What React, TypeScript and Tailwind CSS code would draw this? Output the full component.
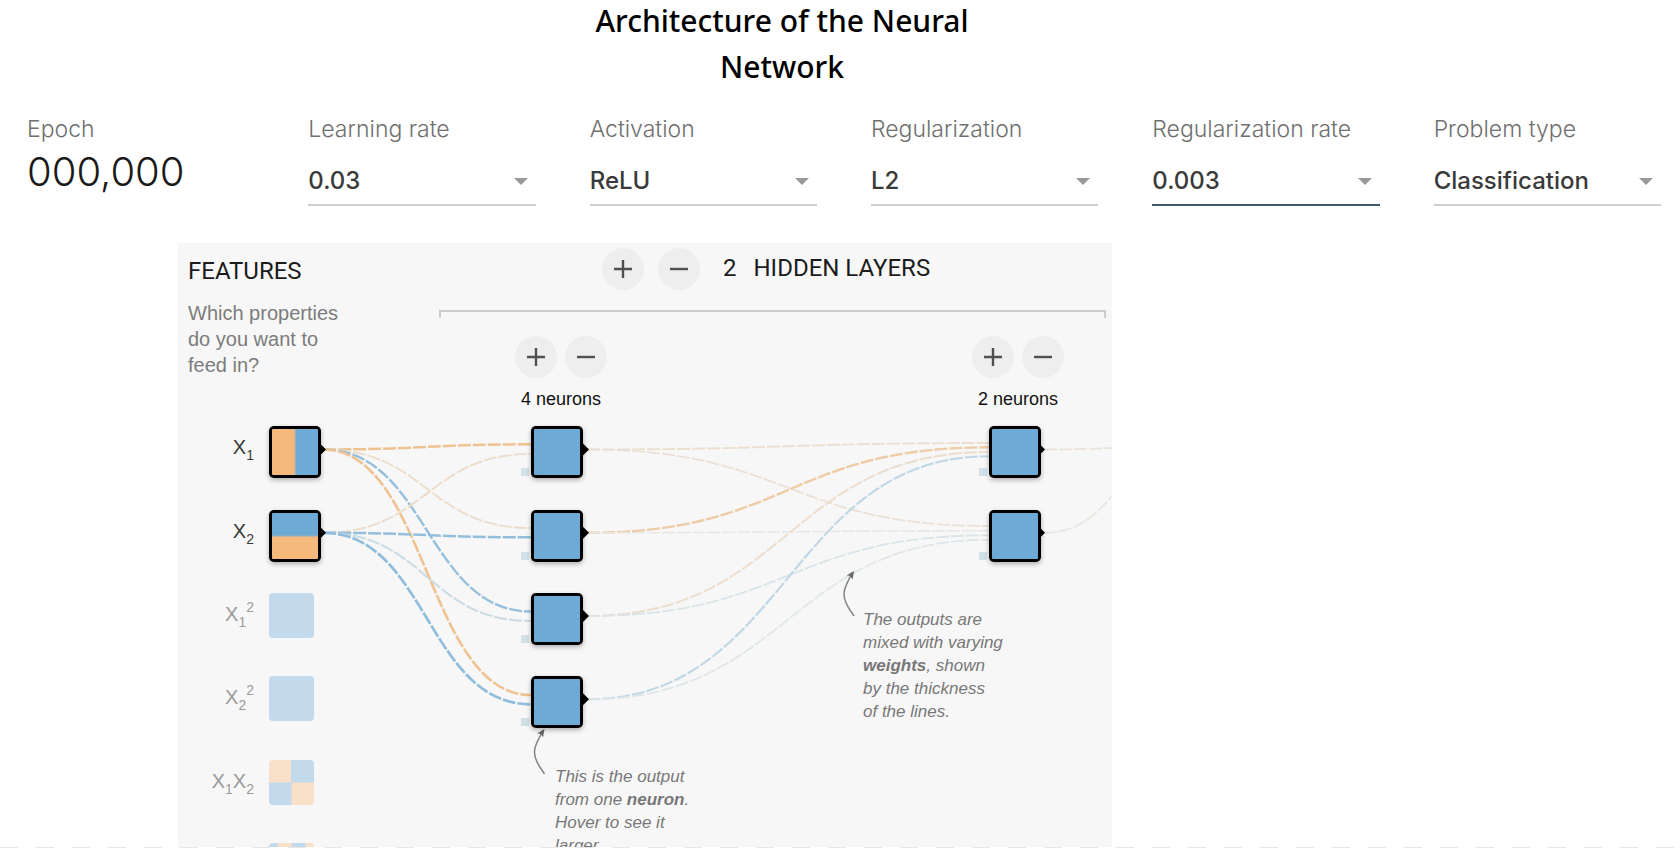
import React from 'react';

const ROW_TOPS = [183, 267, 350, 433, 517, 600];
const SOURCE_Y = [206.5, 289.8, 373, 456.3];

const HEAT = {
  blue: 'bg-[#6eaad6]',
  leftOrange: 'bg-[linear-gradient(90deg,#f6b97c_48%,#6eaad6_53%)]',
  bottomOrange: 'bg-[linear-gradient(180deg,#6eaad6_48%,#f6b97c_53%)]',
};

const LAYERS = [
  {
    id: 'features',
    left: 91,
    tip: 148,
    bias: false,
    heat: [HEAT.leftOrange, HEAT.bottomOrange],
  },
  {
    id: 'hidden-1',
    left: 353,
    tip: 411,
    bias: true,
    heat: [HEAT.blue, HEAT.blue, HEAT.blue, HEAT.blue],
  },
  {
    id: 'hidden-2',
    left: 811,
    tip: 867,
    bias: true,
    heat: [HEAT.blue, HEAT.blue],
  },
];

type Link = [number, number, number, number, string, number];

// x1, y1, x2, y2, colour, width
const LINKS: Link[] = [
  [145, SOURCE_Y[0], 353, 201.3, '#eec391', 2.5],
  [145, SOURCE_Y[0], 353, 285, '#ecdccb', 1.9],
  [145, SOURCE_Y[0], 353, 368.5, '#96c0dc', 2.4],
  [145, SOURCE_Y[0], 353, 452, '#eec391', 2.6],
  [145, SOURCE_Y[1], 353, 211, '#ecdccb', 2],
  [145, SOURCE_Y[1], 353, 294.3, '#93bfdc', 2.5],
  [145, SOURCE_Y[1], 353, 378, '#c9dbe5', 2],
  [145, SOURCE_Y[1], 353, 461.3, '#8fbddb', 2.7],
  [409, SOURCE_Y[0], 811, 200, '#ecdfd0', 1.9],
  [409, SOURCE_Y[0], 811, 283, '#ebe0d6', 1.8],
  [409, SOURCE_Y[1], 811, 204.3, '#edcca6', 2.4],
  [409, SOURCE_Y[1], 811, 287.8, '#e8e7e5', 1.6],
  [409, SOURCE_Y[2], 811, 209, '#ecddcd', 2],
  [409, SOURCE_Y[2], 811, 292.3, '#d9e4e9', 1.8],
  [409, SOURCE_Y[3], 811, 213.3, '#bfd7e5', 2.1],
  [409, SOURCE_Y[3], 811, 296.8, '#dfe6e9', 1.8],
  [866, SOURCE_Y[0], 1010, 203, '#eae3da', 1.8],
  [866, SOURCE_Y[1], 1010, 207, '#e9e6e1', 1.8],
];

const QUADRANTS =
  'bg-[conic-gradient(#c3d9ec_0_89deg,#f8e0c9_91deg_179deg,#c3d9ec_181deg_269deg,#f8e0c9_271deg_359deg,#c3d9ec)]';
const STRIPES =
  'bg-[linear-gradient(90deg,#c3d9ec_18%,#f8e0c9_22%_48%,#c3d9ec_52%_79%,#f8e0c9_83%)]';

const SELECTS = [
  { id: 'learning-rate', label: 'Learning rate', value: '0.03', active: false },
  { id: 'activation', label: 'Activation', value: 'ReLU', active: false },
  { id: 'regularization', label: 'Regularization', value: 'L2', active: false },
  { id: 'regularization-rate', label: 'Regularization rate', value: '0.003', active: true },
  { id: 'problem-type', label: 'Problem type', value: 'Classification', active: false },
];

function RoundButton({ kind, label }: { kind: 'add' | 'remove'; label: string }) {
  return (
    <button
      type="button"
      aria-label={label}
      className="flex size-[42px] shrink-0 items-center justify-center rounded-full bg-[#eeeeee]"
    >
      <svg viewBox="0 0 18 18" className="size-[18px]" stroke="#505050" strokeWidth="2.4">
        <path d={kind === 'add' ? 'M0 9H18M9 0V18' : 'M0 9H18'} />
      </svg>
    </button>
  );
}

function Field({ id, label, value, active }: (typeof SELECTS)[number]) {
  return (
    <div className="flex flex-col">
      <label htmlFor={id} className="whitespace-nowrap text-[23px] leading-6 font-light text-[#707070]">
        {label}
      </label>
      <div className="relative mt-[17px]">
        <select
          id={id}
          defaultValue={value}
          className={
            active
              ? 'h-12 w-full appearance-none border-b-2 border-[#3d5a6b] bg-transparent p-0 text-2xl font-medium text-[#3a3a3a] outline-none'
              : 'h-12 w-full appearance-none border-b-2 border-[#cfcfcf] bg-transparent p-0 text-2xl font-medium text-[#3a3a3a] outline-none'
          }
        >
          <option>{value}</option>
        </select>
        <svg viewBox="0 0 14 7" className="pointer-events-none absolute top-5 right-2 h-[7px] w-[14px]" fill="#999999">
          <path d="M0 0H14L7 7Z" />
        </svg>
      </div>
    </div>
  );
}

function LayerControls({ left, count }: { left: number; count: number }) {
  return (
    <div className="absolute top-[93px] flex flex-col items-center" style={{ left }}>
      <div className="flex gap-2">
        <RoundButton kind="add" label="Add neuron" />
        <RoundButton kind="remove" label="Remove neuron" />
      </div>
      <span className="mt-[9px] text-lg leading-6 text-[#111111]">{count} neurons</span>
    </div>
  );
}

function FeatureLabel({ row, muted, children }: { row: number; muted?: boolean; children: React.ReactNode }) {
  return (
    <div
      className={
        muted
          ? 'absolute left-0 w-[76px] text-right text-xl leading-[42px] whitespace-nowrap text-[#9b9b9b]'
          : 'absolute left-0 w-[76px] text-right text-xl leading-[42px] whitespace-nowrap text-[#3a3a3a]'
      }
      style={{ top: ROW_TOPS[row] }}
    >
      {children}
    </div>
  );
}

function Sub({ children }: { children: React.ReactNode }) {
  return <sub className="static align-[-6px] text-sm leading-none">{children}</sub>;
}

function Sup({ children }: { children: React.ReactNode }) {
  return <sup className="static align-[9px] text-sm leading-none">{children}</sup>;
}

function InactiveFeature({ row, fill }: { row: number; fill: string }) {
  return <div className={`absolute left-[91px] size-[45px] rounded-[4px] ${fill}`} style={{ top: ROW_TOPS[row] }} />;
}

function CalloutArrow({ x, y }: { x: number; y: number }) {
  return (
    <g transform={`translate(${x} ${y})`}>
      <path d="M0 45C-5 37.500-10 31-10 23C-10 16-6 11-3 4" fill="none" stroke="#858585" strokeWidth="1.500" />
      <path d="M0 0L-7.500 4.500L-3.800 4.700L-1.500 8.500Z" fill="#666666" />
    </g>
  );
}

function Network() {
  return (
    <>
      <svg className="absolute inset-0 h-[640px] w-full" viewBox="0 0 934 640" preserveAspectRatio="xMinYMin slice">
        {LINKS.map(([x1, y1, x2, y2, color, width], i) => {
          const mid = (x1 + x2) / 2;
          return (
            <path
              key={i}
              d={`M${x1} ${y1}C${mid} ${y1} ${mid} ${y2} ${x2} ${y2}`}
              fill="none"
              stroke={color}
              strokeWidth={width}
              strokeDasharray="13 2"
            />
          );
        })}
        {LAYERS.map((layer) =>
          layer.heat.map((_, i) => (
            <path
              key={`${layer.id}-${i}`}
              d={`M${layer.tip - 8} ${SOURCE_Y[i] - 8}L${layer.tip} ${SOURCE_Y[i]}L${layer.tip - 8} ${SOURCE_Y[i] + 8}Z`}
            />
          )),
        )}
        <CalloutArrow x={366.5} y={486} />
        <CalloutArrow x={676} y={328} />
      </svg>

      {LAYERS.map((layer) =>
        layer.heat.map((heat, i) => (
          <React.Fragment key={`${layer.id}-${i}`}>
            {layer.bias && (
              <div
                className="absolute size-2 bg-[#d2e0e8]"
                style={{ left: layer.left - 10, top: ROW_TOPS[i] + 42 }}
              />
            )}
            <div
              className="absolute size-[52px] rounded-[5px] bg-black p-[3px] shadow-[0_2px_5px_rgba(0,0,0,0.3)]"
              style={{ left: layer.left, top: ROW_TOPS[i] }}
            >
              <div className={`size-full rounded-[1px] ${heat}`} />
            </div>
          </React.Fragment>
        )),
      )}

      <FeatureLabel row={0}>X<Sub>1</Sub></FeatureLabel>
      <FeatureLabel row={1}>X<Sub>2</Sub></FeatureLabel>
      <FeatureLabel row={2} muted>X<Sub>1</Sub><Sup>2</Sup></FeatureLabel>
      <FeatureLabel row={3} muted>X<Sub>2</Sub><Sup>2</Sup></FeatureLabel>
      <FeatureLabel row={4} muted>X<Sub>1</Sub>X<Sub>2</Sub></FeatureLabel>
      <InactiveFeature row={2} fill="bg-[#c3d9ec]" />
      <InactiveFeature row={3} fill="bg-[#c3d9ec]" />
      <InactiveFeature row={4} fill={QUADRANTS} />
      <InactiveFeature row={5} fill={STRIPES} />

      <LayerControls left={337} count={4} />
      <LayerControls left={794} count={2} />

      <p className="absolute top-[522px] left-[377px] w-[142px] text-[17px] leading-[23px] text-[#777777] italic">
        This is the output from one <b>neuron</b>. Hover to see it larger.
      </p>
      <p className="absolute top-[365px] left-[685px] w-[142px] text-[17px] leading-[23px] text-[#777777] italic">
        The outputs are mixed with varying <b>weights</b>, shown
        <br />
        by the thickness
        <br />
        of the lines.
      </p>
    </>
  );
}

export default function App() {
  return (
    <main className="flex h-screen flex-col overflow-hidden bg-white font-['Inter','Liberation_Sans',sans-serif]">
      <header className="flex justify-center pr-[116px]">
        <h1 className="-mt-[2px] w-[420px] text-center font-['Noto_Sans',sans-serif] text-[30px] leading-[46px] font-medium text-black">
          Architecture of the Neural Network
        </h1>
      </header>

      <section className="grid grid-cols-6 gap-[54px] pt-[27px] pr-[19px] pl-[27px]">
        <div>
          <div className="text-[23px] leading-6 font-light text-[#707070]">Epoch</div>
          <div className="mt-[7px] text-[40px] leading-12 font-light text-[#1a1a1a]">000,000</div>
        </div>
        {SELECTS.map((s) => (
          <Field key={s.id} {...s} />
        ))}
      </section>

      <section className="relative mt-[37px] ml-[178px] min-h-0 w-[934px] flex-1 overflow-hidden bg-[#f7f7f7] font-['Liberation_Sans',sans-serif]">
        <div className="flex">
          <div className="w-[261px] shrink-0 pl-[10px]">
            <h2 className="pt-[14px] font-['Roboto',sans-serif] text-2xl leading-7 text-[#1c1c1c]">FEATURES</h2>
            <p className="mt-[15px] w-[165px] text-xl leading-[26px] text-[#7c7c7c]">
              Which properties do you want to feed in?
            </p>
          </div>
          <div className="mr-[6px] flex-1">
            <div className="flex items-center pt-[5px] pl-[163px] font-['Roboto',sans-serif] text-2xl leading-7 text-[#1c1c1c]">
              <RoundButton kind="add" label="Add hidden layer" />
              <div className="ml-[14px]">
                <RoundButton kind="remove" label="Remove hidden layer" />
              </div>
              <span className="ml-[23px] pb-0.5">2</span>
              <h2 className="ml-[17px] pb-0.5">HIDDEN LAYERS</h2>
            </div>
            <div className="mt-5 h-2 border-x-2 border-t-2 border-[#cccccc]" />
          </div>
        </div>
        <Network />
      </section>

      <div className="h-px shrink-0 bg-[repeating-linear-gradient(90deg,#e6e6e6_0_18px,#ffffff_18px_36px)]" />
    </main>
  );
}
